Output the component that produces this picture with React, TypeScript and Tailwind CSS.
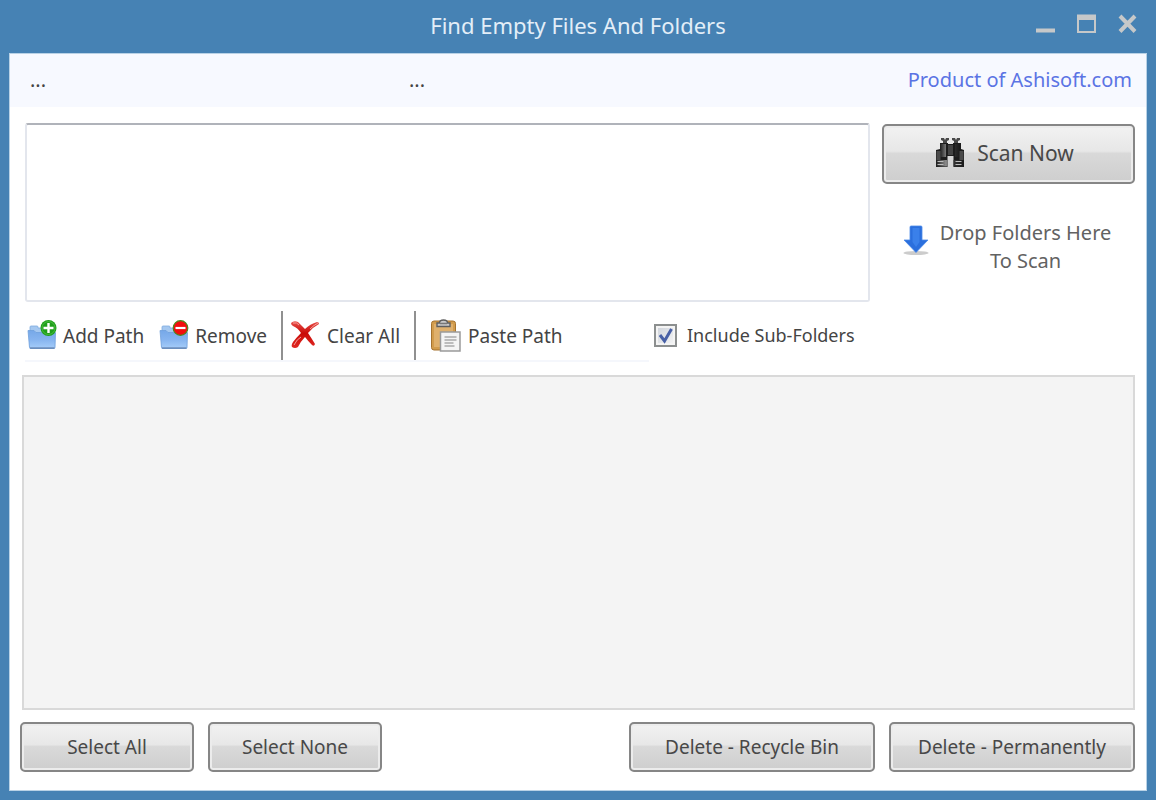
import { useState } from 'react';
import type { ReactNode } from 'react';

const FolderShape = ({ id }: { id: string }) => (
  <>
    <defs>
      <linearGradient id={id} x1="0" y1="0" x2="0" y2="1">
        <stop offset="0" stopColor="#76a8e8" />
        <stop offset="0.500" stopColor="#86b4ef" />
        <stop offset="1" stopColor="#a6cdfa" />
      </linearGradient>
    </defs>
    <path d="M3 9V7q0-1 1-1h6q1 0 1 1v1h15v19H3z" fill="#a5c8f0" stroke="#7fabdf" strokeWidth="0.8" />
    <path d="M1 10.500h6l2 2h19.500L28 27.500q0 1-1 1H3.500q-1 0-1-1z" fill={`url(#${id})`} stroke="#6f9fdc" strokeWidth="0.8" />
    <path d="M3 28h24.500" stroke="#54719b" strokeWidth="1" />
  </>
);

const AddFolderIcon = () => (
  <svg width="30" height="32" viewBox="0 0 30 32" aria-hidden="true">
    <FolderShape id="folder-add" />
    <circle cx="21.500" cy="8" r="8" fill="#1f9f1b" />
    <circle cx="21.500" cy="8" r="6.500" fill="none" stroke="#52c244" strokeWidth="0.8" />
    <path d="M21.500 3v10M16.500 8h10" stroke="#fff" strokeWidth="2.400" />
  </svg>
);

const RemoveFolderIcon = () => (
  <svg width="30" height="32" viewBox="0 0 30 32" aria-hidden="true">
    <FolderShape id="folder-remove" />
    <circle cx="21.500" cy="8" r="7.300" fill="#f20d0d" stroke="#4b8a1c" strokeWidth="1.200" />
    <path d="M16.500 8h10" stroke="#fff" strokeWidth="2.200" />
  </svg>
);

const ClearIcon = () => (
  <svg width="30" height="30" viewBox="0 0 30 30" aria-hidden="true">
    <defs>
      <linearGradient id="cross" x1="0" y1="0" x2="0" y2="1">
        <stop offset="0" stopColor="#e9534d" />
        <stop offset="0.450" stopColor="#c90b08" />
        <stop offset="1" stopColor="#e02a24" />
      </linearGradient>
    </defs>
    <path
      d="M0 2q3-3 7-1 4 4 7 7 5-5 12-7 2 0 2 2-6 3-11 9 4 6 7 11-1 3-3 1-4-4-7-8-4 4-7 10-3 2-6 0-1-2 1-5 3-4 8-9Q7 7 2 5 0 4 0 2z"
      fill="url(#cross)"
    />
    <path d="M2 2q4-1 6 2M3 24q3-6 7-8M19 8q4-4 8-6" fill="none" stroke="#f6a09b" strokeWidth="1" />
  </svg>
);

const PasteIcon = () => (
  <svg width="32" height="34" viewBox="0 0 32 34" aria-hidden="true">
    <rect x="1.500" y="2" width="24" height="29" rx="2.500" fill="#d29c4c" stroke="#a5732f" />
    <rect x="4" y="5" width="19" height="23" fill="#dfb06c" />
    <path d="M7 4h2.500q0-3 4-3t4 3H20v3.500H7z" fill="#c9c9c9" stroke="#5f5f5f" strokeWidth="1.400" />
    <path d="M10 4.500h7" stroke="#777" strokeWidth="1.500" />
    <rect x="10.500" y="13" width="19.500" height="19" fill="#f4f4f4" stroke="#9a9a9a" strokeWidth="1.500" />
    <path d="M14.500 18h12M14.500 21h12M14.500 24h9M14.500 27h10" stroke="#a9a9a9" strokeWidth="1.300" />
  </svg>
);

const BinocularsIcon = () => (
  <svg width="30" height="30" viewBox="0 0 30 30" aria-hidden="true">
    <defs>
      <linearGradient id="barrel" x1="0" y1="0" x2="1" y2="0">
        <stop offset="0" stopColor="#1c1c1c" />
        <stop offset="0.350" stopColor="#8a8a8a" />
        <stop offset="0.650" stopColor="#333" />
        <stop offset="1" stopColor="#1a1a1a" />
      </linearGradient>
    </defs>
    {/* eyepieces */}
    <path d="M6 0h3l1 2 1-2h3v2l-2 1v3H8V3L6 2zM17 0h3l1 2 1-2h3v2l-2 1v3h-4V3l-2-1z" fill="#4a4a4a" />
    {/* bridge and bodies */}
    <path d="M5 5h8v1h5V5h8v6l3 1v17H18.500V18h-6v11H1V12l4-1z" fill="#1d1d1d" />
    <path d="M5 6h6v13H5zM20 6h5v13h-5z" fill="url(#barrel)" />
    <path d="M13 7h5v10h-5z" fill="#444" />
    {/* lenses */}
    <path d="M1.500 13h4v9h-4zM24.500 13h4v9h-4z" fill="#4b4b4b" />
    <path d="M1 22h11v6.500H1zM18.500 22H29v6.500H18.500z" fill="url(#barrel)" />
    <path d="M2.500 23.500h6M2.500 26.500h6M20.500 23.500h6M20.500 26.500h6" stroke="#bdbdbd" strokeWidth="1" />
  </svg>
);

const DropIcon = () => (
  <svg width="28" height="31" viewBox="0 0 28 31" aria-hidden="true">
    <ellipse cx="14" cy="28" rx="12.500" ry="2" fill="#ccc" />
    <path d="M8 2q0-1 1-1h10q1 0 1 1v13h6L14 27.500 2 15h6z" fill="#2b6fdd" stroke="#4d8ae8" strokeWidth="0.800" />
    <path d="M10.500 3h7v14l-3.500 5-3.500-5z" fill="#3a80ea" />
  </svg>
);

const MetalButton = ({ className, children }: { className: string; children: ReactNode }) => (
  <button
    type="button"
    className={`flex items-center justify-center rounded-[5px] border-2 border-[#868686] bg-[linear-gradient(#f2f2f2,#e7e7e7_45%,#d9d9d9_49%,#cecece)] text-[#484848] shadow-[inset_0_0_0_2px_#ececec] ${className}`}
  >
    {children}
  </button>
);

const ToolButton = ({ icon, label }: { icon: ReactNode; label: string }) => (
  <button type="button" className="flex items-center gap-[6px] whitespace-nowrap">
    {icon}
    {label}
  </button>
);

export default function App() {
  const [paths, setPaths] = useState('');
  const [subFolders, setSubFolders] = useState(true);

  return (
    <div className="flex min-h-screen flex-col bg-[#4682b4] px-[9px] pb-[9px] font-['Noto_Sans',sans-serif] text-[19px] leading-7 text-[#444]">
      {/* Title bar */}
      <header className="grid h-[53px] grid-cols-[1fr_auto_1fr] items-center pb-1">
        <h1 className="col-start-2 text-[22px] text-[#e3eef8]">Find Empty Files And Folders</h1>
        <div className="flex items-center justify-end gap-[22px] pr-[10px] pb-[2px] text-[#c6c8c9]">
          <button type="button" aria-label="Minimize">
            <svg width="19" height="20" viewBox="0 0 19 20">
              <path d="M0 16.500h19" stroke="currentColor" strokeWidth="4" />
            </svg>
          </button>
          <button type="button" aria-label="Maximize">
            <svg width="19" height="20" viewBox="0 0 19 20">
              <path d="M1 1.500h17V18H1z" fill="none" stroke="currentColor" strokeWidth="2" />
              <path d="M0 1h19v5H0z" fill="currentColor" />
            </svg>
          </button>
          <button type="button" aria-label="Close">
            <svg width="19" height="20" viewBox="0 0 19 20">
              <path d="M2 2l15 15.500M17 2L2 17.500" stroke="currentColor" strokeWidth="4" />
            </svg>
          </button>
        </div>
      </header>

      <main className="flex flex-1 flex-col border border-[#b9d2e6] bg-white">
        {/* Status strip */}
        <div className="flex h-[53px] items-center bg-[#f7f9ff] pr-[14px] pb-[2px] pl-5 text-[20px]">
          <span className="w-[379px]">...</span>
          <span className="flex-1">...</span>
          <a href="https://www.ashisoft.com" className="text-[#5b74e4]">
            Product of Ashisoft.com
          </a>
        </div>

        {/* Paths and scan */}
        <div className="flex gap-3 pt-4 pr-[11px] pl-[15px]">
          <textarea
            aria-label="Folders to scan"
            value={paths}
            onChange={e => setPaths(e.target.value)}
            className="h-[179px] min-w-0 flex-1 resize-none rounded-[3px] border-2 border-[#e3e6ed] border-t-[#b0b3ba] bg-white p-2 outline-none"
          />
          <div className="w-[253px]">
            <MetalButton className="mt-px h-[60px] w-full gap-3 pr-2 pb-[2px] text-[21px]">
              <BinocularsIcon />
              Scan Now
            </MetalButton>
            <div className="flex justify-center gap-[10px] pt-[35px] pr-1 text-[20px] text-[#626262]">
              <span className="pt-[6px]">
                <DropIcon />
              </span>
              <p className="text-center whitespace-nowrap">
                Drop Folders Here
                <br />
                To Scan
              </p>
            </div>
          </div>
        </div>

        {/* Toolbar */}
        <div className="flex pt-[9px] pl-[15px]">
          <div className="flex h-[51px] w-[624px] items-center border-b-2 border-[#f5f7fc] pl-[2px]">
            <div className="flex h-full items-center gap-[15px] border-r-2 border-[#909090] pr-[14px]">
              <ToolButton icon={<AddFolderIcon />} label="Add Path" />
              <ToolButton icon={<RemoveFolderIcon />} label="Remove" />
            </div>
            <div className="flex h-full items-center border-r-2 border-[#909090] pr-[14px] pl-2">
              <ToolButton icon={<ClearIcon />} label="Clear All" />
            </div>
            <div className="flex h-full items-center pl-[14px]">
              <ToolButton icon={<PasteIcon />} label="Paste Path" />
            </div>
          </div>
          <label className="ml-[5px] flex h-12 items-center gap-[10px] text-[18px] whitespace-nowrap">
            <span className="grid">
              <input
                type="checkbox"
                checked={subFolders}
                onChange={e => setSubFolders(e.target.checked)}
                className="col-start-1 row-start-1 size-[23px] appearance-none border-2 border-[#8c8f8f] bg-linear-to-br from-[#cdd2da] to-[#f6f6f6] shadow-[inset_0_0_0_2px_#f4f4f4]"
              />
              {subFolders && (
                <svg width="23" height="23" viewBox="0 0 23 23" className="pointer-events-none col-start-1 row-start-1" aria-hidden="true">
                  <path d="M6 11l4.500 6L17.500 5" fill="none" stroke="#4860a6" strokeWidth="3" />
                </svg>
              )}
            </span>
            Include Sub-Folders
          </label>
        </div>

        {/* Results */}
        <section aria-label="Results" className="mt-[13px] mr-[11px] ml-3 flex-1 border-2 border-[#d9d9d9] bg-[#f4f4f4]" />

        {/* Actions */}
        <footer className="flex gap-[14px] pt-3 pr-[11px] pb-[18px] pl-[10px]">
          <MetalButton className="h-[50px] w-[174px]">Select All</MetalButton>
          <MetalButton className="h-[50px] w-[174px]">Select None</MetalButton>
          <MetalButton className="ml-auto h-[50px] w-[246px]">Delete - Recycle Bin</MetalButton>
          <MetalButton className="h-[50px] w-[246px]">Delete - Permanently</MetalButton>
        </footer>
      </main>
    </div>
  );
}
